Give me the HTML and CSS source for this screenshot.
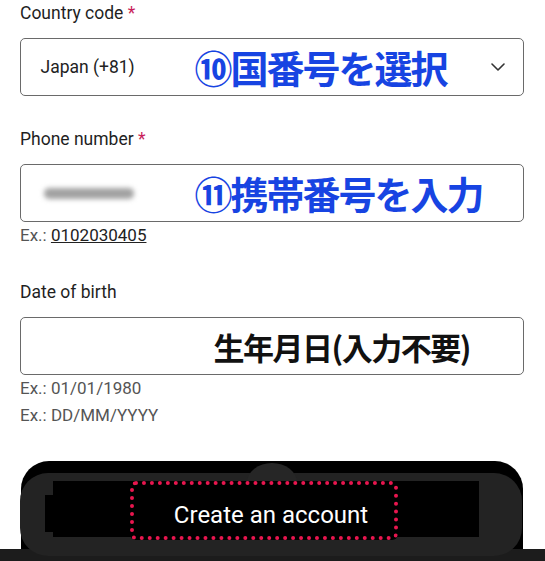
FILE: index.html
```html
<!DOCTYPE html>
<html lang="en">
<head>
<meta charset="utf-8">
<title>Create an account</title>
<link rel="stylesheet" href="styles.css">
</head>
<body>
<div class="page">
  <form class="form">
    <div class="field">
      <div class="label">Country code <span class="req">*</span></div>
      <div class="box">
        <span class="value">Japan (+81)</span>
        <span class="note note-blue">⑩国番号を選択</span>
        <svg class="chevron" width="14" height="8" viewBox="0 0 14 8"><polyline points="1,1 7,7 13,1" fill="none" stroke="#333" stroke-width="1.6" stroke-linecap="round" stroke-linejoin="round"/></svg>
      </div>
    </div>
    <div class="field">
      <div class="label">Phone number <span class="req">*</span></div>
      <div class="box">
        <span class="value"><span class="blur"></span></span>
        <span class="note note-blue">⑪携帯番号を入力</span>
      </div>
      <div class="hint">Ex.: <span class="ex">0102030405</span></div>
    </div>
    <div class="field">
      <div class="label">Date of birth</div>
      <div class="box">
        <span class="value value-date"></span>
        <span class="note note-black">生年月日(入力不要)</span>
      </div>
      <div class="hint">Ex.: 01/01/1980</div>
      <div class="hint">Ex.: DD/MM/YYYY</div>
    </div>
  </form>
  <div class="footer">
    <div class="footer-back"></div>
    <div class="footer-bar"></div>
    <div class="footer-panel">
      <div class="bump"></div>
      <div class="stub"></div>
      <div class="cta-zone">
        <button type="button" class="cta">Create an account</button>
      </div>
    </div>
  </div>
</div>
</body>
</html>
```
FILE: styles.css
```css
html, body {
  margin: 0;
  padding: 0;
  background: #fff;
  overflow: hidden;
}
body {
  font-family: Roboto, "Noto Sans CJK JP", sans-serif;
  color: #1f1f1f;
}
.page {
  width: 545px;
  height: 561px;
  display: flex;
  flex-direction: column;
}
.form {
  display: flex;
  flex-direction: column;
  gap: 32px;
  padding: 2px 21px 0 20px;
}
.field {
  display: flex;
  flex-direction: column;
}
.label {
  font-size: 17.5px;
  line-height: 22px;
  margin-bottom: 14px;
  color: #1f1f1f;
}
.req {
  color: #c81e5a;
}
.box {
  box-sizing: border-box;
  height: 58px;
  border: 1.5px solid #6a6a6a;
  border-radius: 5px;
  display: flex;
  align-items: center;
  padding: 0 18px 0 19.5px;
}
.value {
  flex: 0 0 154px;
  font-size: 17.5px;
  color: #222;
  display: flex;
  align-items: center;
}
.value-date {
  flex-basis: 173px;
}
.blur {
  display: block;
  width: 90px;
  height: 11px;
  margin-left: 3px;
  background: #a2a2a2;
  border-radius: 5px;
  filter: blur(2.5px);
}
.note {
  font-family: "Noto Sans CJK JP", sans-serif;
  font-weight: 700;
  white-space: nowrap;
}
.note-blue {
  color: #1744e2;
  font-size: 38px;
  letter-spacing: -2px;
  line-height: 1;
}
.note-black {
  color: #111;
  font-size: 31px;
  letter-spacing: -1.5px;
  line-height: 1;
}
.chevron {
  margin-left: auto;
}
.hint {
  font-size: 17px;
  line-height: 27px;
  color: #555;
}
.ex {
  color: #222;
  text-decoration: underline;
}
.footer {
  position: relative;
  margin-top: 32px;
  height: 100px;
}
.footer-back {
  position: absolute;
  left: 21px;
  right: 22px;
  top: 0;
  height: 90px;
  background: #000;
  border-radius: 28px 28px 0 0;
}
.footer-bar {
  position: absolute;
  left: 0;
  right: 0;
  bottom: 0;
  height: 12px;
  background: #1c1c1c;
}
.footer-panel {
  position: relative;
  box-sizing: border-box;
  margin: 12px 23px 0 20px;
  height: 83px;
  background: #232323;
  border-radius: 28px;
  padding: 5px 0 0 33px;
}
.bump {
  position: absolute;
  left: 227px;
  top: -10px;
  width: 50px;
  height: 20px;
  background: #262626;
  border-radius: 50% 50% 0 0 / 100% 100% 0 0;
}
.stub {
  position: absolute;
  left: 25px;
  top: 22px;
  width: 32px;
  height: 37px;
  background: #000;
}
.cta-zone {
  position: relative;
  width: 426px;
  height: 56px;
  background: #000;
}
.cta {
  box-sizing: border-box;
  margin: 3px 0 0 77px;
  width: 268px;
  height: 59px;
  background: #000;
  border: 4px dotted #e8164f;
  border-radius: 6px;
  color: #fff;
  font-family: Roboto, sans-serif;
  font-size: 24px;
  display: flex;
  align-items: center;
  justify-content: center;
  padding: 8px 0 0 14px;
  cursor: pointer;
}
```
